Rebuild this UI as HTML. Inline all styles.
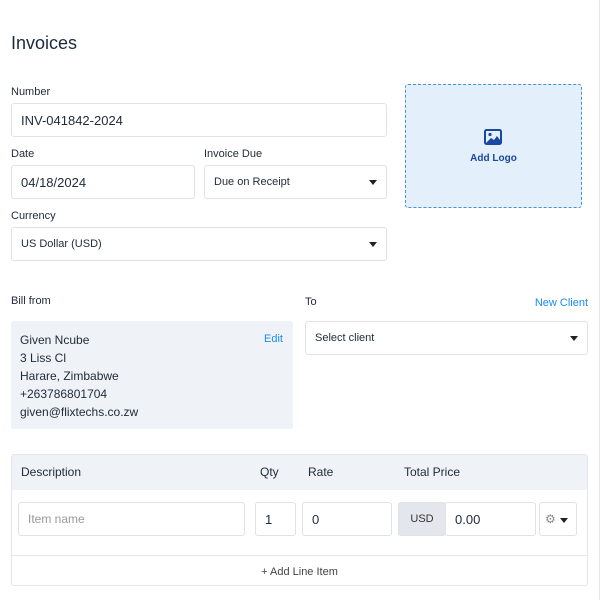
<!DOCTYPE html>
<html><head><meta charset="utf-8"><style>
*{box-sizing:border-box;margin:0;padding:0}
body{width:602px;height:600px;background:#fff;font-family:"Liberation Sans",sans-serif;color:#1f2a37;position:relative;overflow:hidden}
.a{position:absolute}
.lbl{font-size:11px;color:#1f2a37}
.inp{position:absolute;border:1px solid #dfe2e6;border-radius:3px;background:#fff;font-size:13px;display:flex;align-items:center;padding-left:9px;color:#1f2a37}
.sel{font-size:11px}
.car{position:absolute;right:9px;top:14px;width:0;height:0;border-left:4px solid transparent;border-right:4px solid transparent;border-top:5px solid #222}
.line{font-size:12px;position:absolute;left:20px}
</style></head><body>
<div class="a" style="right:2px;top:0;width:1px;height:600px;background:#e6e6e6"></div>
<div class="a" style="left:11px;top:33px;font-size:18px;color:#1b2a3e">Invoices</div>

<div class="a lbl" style="left:11px;top:86px">Number</div>
<div class="inp" style="left:11px;top:103px;width:376px;height:34px">INV-041842-2024</div>
<div class="a lbl" style="left:11px;top:148px">Date</div>
<div class="inp" style="left:11px;top:165px;width:184px;height:34px">04/18/2024</div>
<div class="a lbl" style="left:204px;top:148px">Invoice Due</div>
<div class="inp sel" style="left:204px;top:165px;width:183px;height:34px">Due on Receipt<span class="car"></span></div>
<div class="a lbl" style="left:11px;top:210px">Currency</div>
<div class="inp sel" style="left:11px;top:227px;width:376px;height:34px">US Dollar (USD)<span class="car"></span></div>

<div class="a" style="left:405px;top:84px;width:177px;height:124px;border:1px dashed #4a90d9;border-radius:3px;background:#e3f0fc"></div>
<svg class="a" style="left:484px;top:129px" width="18" height="16" viewBox="0 0 18 16"><rect x="1" y="1" width="16" height="14" rx="1.5" fill="none" stroke="#1a47a0" stroke-width="2"/><circle cx="6" cy="5.5" r="1.6" fill="#1a47a0"/><path d="M2 14 L7 9 L10 11 L13 7 L16 11 L16 14 Z" fill="#1a47a0"/></svg>
<div class="a" style="left:405px;top:153px;width:177px;text-align:center;font-size:10px;font-weight:bold;color:#1a47a0">Add Logo</div>

<div class="a lbl" style="left:11px;top:295px">Bill from</div>
<div class="a lbl" style="left:305px;top:296px">To</div>
<div class="a" style="right:14px;top:297px;font-size:11px;color:#1a8cf0">New Client</div>
<div class="a" style="left:11px;top:321px;width:282px;height:108px;background:#eff2f7;border-radius:3px"></div>
<div class="line" style="top:333px">Given Ncube</div>
<div class="line" style="top:351px">3 Liss Cl</div>
<div class="line" style="top:369px">Harare, Zimbabwe</div>
<div class="line" style="top:387px">+263786801704</div>
<div class="line" style="top:405px">given@flixtechs.co.zw</div>
<div class="a" style="left:264px;top:333px;font-size:11px;color:#1a8cf0">Edit</div>
<div class="inp sel" style="left:305px;top:321px;width:283px;height:34px">Select client<span class="car"></span></div>

<div class="a" style="left:11px;top:454px;width:577px;height:132px;border:1px solid #e3e6ea;border-radius:3px"></div>
<div class="a" style="left:12px;top:455px;width:575px;height:35px;background:#eff2f7"></div>
<div class="a" style="left:21px;top:465px;font-size:12px">Description</div>
<div class="a" style="left:260px;top:465px;font-size:12px">Qty</div>
<div class="a" style="left:308px;top:465px;font-size:12px">Rate</div>
<div class="a" style="left:404px;top:465px;font-size:12px">Total Price</div>
<div class="inp" style="left:18px;top:502px;width:227px;height:34px;color:#999;font-size:12px">Item name</div>
<div class="inp" style="left:255px;top:502px;width:41px;height:34px">1</div>
<div class="inp" style="left:302px;top:502px;width:90px;height:34px">0</div>
<div class="inp" style="left:398px;top:502px;width:48px;height:34px;background:#e3e7ed;font-size:11px;justify-content:center;padding:0;color:#333">USD</div>
<div class="inp" style="left:445px;top:502px;width:91px;height:34px">0.00</div>
<div class="inp" style="left:539px;top:502px;width:38px;height:34px;padding-left:5px"><span style="font-size:12px;color:#888">⚙</span><span class="car" style="right:8px;top:15px"></span></div>
<div class="a" style="left:12px;top:555px;width:575px;height:1px;background:#e3e6ea"></div>
<div class="a" style="left:11px;top:566px;width:577px;text-align:center;font-size:11px;color:#444">+ Add Line Item</div>
</body></html>
